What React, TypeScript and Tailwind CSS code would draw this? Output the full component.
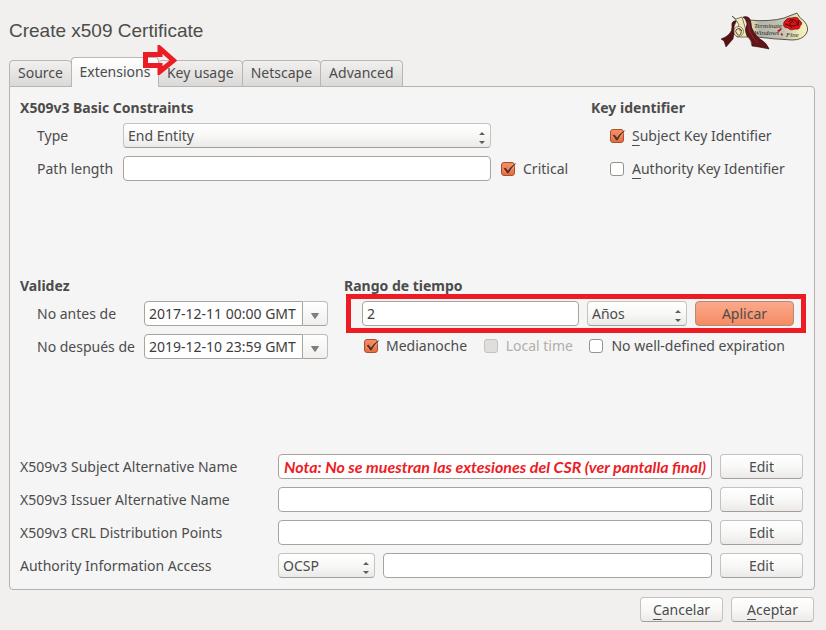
import type { ReactNode } from "react";

const raised =
  "rounded-[4px] border border-[#c6c2bd] border-b-[#a39e98] bg-linear-to-b from-white via-[#f8f8f7] to-[#ebeae9]";
const field =
  "h-[25px] w-full min-w-0 rounded-[4px] border border-[#a8a39c] bg-white px-1 leading-[20px] text-[#3c3c3c] outline-none";

function Button({ children }: { children: ReactNode }) {
  return (
    <button type="button" className={`h-[25px] w-[83px] leading-[20px] ${raised}`}>
      {children}
    </button>
  );
}

function Select({ id, label, options }: { id: string; label?: string; options: string[] }) {
  return (
    <div className="relative w-full">
      <select
        id={id}
        aria-label={label}
        className={`block h-[25px] w-full appearance-none pr-5 pl-1 leading-[20px] outline-none ${raised}`}
      >
        {options.map((o) => (
          <option key={o}>{o}</option>
        ))}
      </select>
      <svg
        className="pointer-events-none absolute right-1.5 bottom-1 h-3 w-1.5"
        viewBox="0 0 6 12"
        fill="#5f5d5b"
        aria-hidden="true"
      >
        <path d="M0 3 3 0 6 3zM0 9h6L3 12z" />
      </svg>
    </div>
  );
}

function DateBox({ id, value }: { id: string; value: string }) {
  return (
    <div className="flex h-[25px] w-full min-w-0">
      <input
        id={id}
        defaultValue={value}
        className="w-0 min-w-0 flex-1 rounded-l-[4px] border border-[#a8a39c] bg-white pl-1 leading-[20px] text-[#3c3c3c] outline-none"
      />
      <button
        type="button"
        aria-label="Elegir fecha"
        className="flex w-[25px] shrink-0 items-center justify-center rounded-r-[4px] border border-l-0 border-[#c0bcb7] border-b-[#a8a39c] bg-linear-to-b from-white to-[#f0efee] pt-1"
      >
        <svg className="h-1.5 w-2" viewBox="0 0 8 6" aria-hidden="true">
          <path d="M.5.5h7L4 5.500z" fill="#85827e" stroke="#6c6a67" strokeWidth=".8" />
        </svg>
      </button>
    </div>
  );
}

function Check({
  children,
  checked = false,
  disabled = false,
}: {
  children: ReactNode;
  checked?: boolean;
  disabled?: boolean;
}) {
  return (
    <label className={`flex items-center gap-2 whitespace-nowrap ${disabled ? "text-[#b3afaa]" : ""}`}>
      <span className="relative size-3.5 shrink-0">
        <input
          type="checkbox"
          defaultChecked={checked}
          disabled={disabled}
          className="peer block size-3.5 appearance-none rounded-[3px] border border-[#96928c] bg-white checked:border-[#a5502f] checked:bg-linear-to-b checked:from-[#f98d62] checked:to-[#ea6b3c] disabled:border-[#c5c2be] disabled:bg-[#dfdedd]"
        />
        <svg
          className="pointer-events-none absolute top-0 left-0 hidden h-3.5 w-4 overflow-visible peer-checked:block"
          viewBox="0 0 16 14"
          fill="none"
          aria-hidden="true"
        >
          <path d="M3 6 6.500 10 13 3" stroke="#f9b79c" strokeWidth="3.600" opacity=".5" />
          <path d="M2.500 6.500 4.500 5.500 7 8.500Q10 3.500 15.500 1 11 5 7.500 11.500H6Q4.500 8.500 2.500 6.500Z" fill="#5b3226" />
        </svg>
      </span>
      <span>{children}</span>
    </label>
  );
}

const Key = ({ children }: { children: ReactNode }) => (
  <span className="underline underline-offset-4">{children}</span>
);

function Logo() {
  return (
    <svg className="h-10 w-[88px]" viewBox="0 0 88 40" role="img" aria-label="Logo">
      <defs>
        <linearGradient id="paper" x1="0" x2="1">
          <stop offset="0" stopColor="#f4ecb4" />
          <stop offset=".2" stopColor="#b4b5ab" />
          <stop offset=".6" stopColor="#c4c4b2" />
          <stop offset=".85" stopColor="#eee8b4" />
          <stop offset="1" stopColor="#f8f3c4" />
        </linearGradient>
      </defs>
      <path
        d="M28 8Q50 10 64 6L77 1Q79 6 84 9 90 16 86 22 82 28 72 28 52 27 37 25Q31 17 28 8Z"
        fill="url(#paper)"
        stroke="#33332b"
        strokeWidth=".8"
      />
      <path d="M12 4 16 7 22 5 28 25H17Q14 23 15 17 24 15 12 4Z" fill="#f1e9b5" stroke="#45412d" strokeWidth=".7" />
      <circle cx="18.500" cy="19.500" r="5" fill="#eee5b8" stroke="#4b4437" strokeWidth=".6" />
      <path d="M22 19q-2-4-5-2t0 5 4-1-2-3" fill="none" stroke="#493a2e" strokeWidth=".9" />
      <path
        d="M14 9Q17 8 16 10 13 14 14 22L13 27 6 35 4 29 1 27Q12 23 12 15 11 10 14 9Z"
        fill="#571014"
        stroke="#27090b"
        strokeWidth=".5"
      />
      <path
        d="M23 5Q30 3 31 11 31 20 40 27 47 31 49 37L39 35 32 34Q32 28 27 24 24 19 27 12 26 7 23 5Z"
        fill="#651519"
        stroke="#27090b"
        strokeWidth=".6"
      />
      <path d="M28.500 10Q28 22 38 31" fill="none" stroke="#8a3436" strokeWidth=".8" />
      <g fill="#2b2b27" fontFamily="Liberation Serif, serif" fontStyle="italic" fontSize="7">
        <text x="34" y="16">Terminate</text>
        <text x="34" y="23">Windows</text>
        <text x="66" y="25">Fine</text>
      </g>
      <path d="m57 19 4-3 1 1-3 3Zm4 2 2 1-1 2-1-1Z" fill="#bd121a" />
      <path
        d="M64 10q3-5 8-4 6-2 7 2 5 3 1 6 0 4-5 3-5 2-7-1-6 0-4-6Z"
        fill="#dc141b"
        stroke="#82080f"
        strokeWidth=".7"
      />
      <path
        d="M68 10q4-4 8-1 3 4-2 5-5 0-4-3 3-3 4 0M65 12q5 1 7 4m7-8q-1 3-1 6"
        fill="none"
        stroke="#570508"
        strokeWidth="1"
      />
    </svg>
  );
}

const tabs = ["Source", "Extensions", "Key usage", "Netscape", "Advanced"];

const names = [
  { id: "san", label: "X509v3 Subject Alternative Name", note: "Nota: No se muestran las extesiones del CSR (ver pantalla final)" },
  { id: "ian", label: "X509v3 Issuer Alternative Name", note: "" },
  { id: "crl", label: "X509v3 CRL Distribution Points", note: "" },
];

export default function App() {
  return (
    <div className="flex min-h-screen flex-col bg-[#f1f0ee] pr-[11px] pb-2 pl-[9px] font-['Noto_Sans',sans-serif] text-[14px] leading-[20px] text-[#4c4c4c]">
      <header className="flex h-[57px] items-start justify-between pt-3 pr-[7px]">
        <h1 className="pt-[5px] font-['Liberation_Sans',sans-serif] text-[19px] leading-[28px]">
          Create x509 Certificate
        </h1>
        <Logo />
      </header>

      <div role="tablist" className="relative z-10 -mb-px flex h-[30px] items-end">
        {tabs.map((t) =>
          t === "Extensions" ? (
            <button
              key={t}
              type="button"
              role="tab"
              aria-selected="true"
              className="-ml-px h-[30px] w-[88px] rounded-t-[4px] border border-b-0 border-[#b9b5b0] bg-linear-to-b from-white to-[#f5f5f5] to-60% pb-0.5"
            >
              {t}
            </button>
          ) : (
            <button
              key={t}
              type="button"
              role="tab"
              aria-selected="false"
              className="-ml-px h-[27px] rounded-t-[4px] border border-[#b9b5b0] bg-linear-to-b from-[#f1f0ef] to-[#dbd9d7] px-2 pb-0.5 first:ml-0"
            >
              {t}
            </button>
          ),
        )}
        <svg
          className="absolute -top-3 left-[134px] h-[30px] w-[34px]"
          viewBox="0 0 34 30"
          fill="none"
          aria-hidden="true"
        >
          <path d="M2.500 9.500H17V3.500L30.500 15.500 17 26.500V20.500H2.500Z" stroke="#ed1c24" strokeWidth="5" />
        </svg>
      </div>

      <main className="flex flex-1 flex-col justify-between rounded-b-[4px] rounded-tr-[4px] border border-[#b5b1ac] bg-[#f5f5f5] pt-[11px] pr-[11px] pb-[11px] pl-2.5">
        <div className="flex">
          <section className="flex-1">
            <h2 className="mb-[5px] font-bold">X509v3 Basic Constraints</h2>
            <div className="grid grid-cols-[86px_1fr_100px] items-center gap-y-2 pl-[17px]">
              <label htmlFor="type">Type</label>
              <Select id="type" options={["End Entity", "Certification Authority"]} />
              <span />
              <label htmlFor="path">Path length</label>
              <input id="path" className={field} />
              <div className="pl-2.5">
                <Check checked>Critical</Check>
              </div>
            </div>
          </section>
          <section className="w-[212px]">
            <h2 className="mb-[5px] font-bold">Key identifier</h2>
            <div className="grid auto-rows-[25px] items-center gap-y-2 pl-[19px]">
              <Check checked>
                <Key>S</Key>ubject Key Identifier
              </Check>
              <Check>
                <Key>A</Key>uthority Key Identifier
              </Check>
            </div>
          </section>
        </div>

        <div className="flex gap-4">
          <section className="w-[308px]">
            <h2 className="mb-[5px] font-bold">Validez</h2>
            <div className="grid grid-cols-[107px_minmax(0,1fr)] items-center gap-y-2 pl-[17px]">
              <label htmlFor="before">No antes de</label>
              <DateBox id="before" value="2017-12-11 00:00 GMT" />
              <label htmlFor="after">No después de</label>
              <DateBox id="after" value="2019-12-10 23:59 GMT" />
            </div>
          </section>
          <section className="flex-1">
            <h2 className="mb-[5px] font-bold">Rango de tiempo</h2>
            <div className="relative mr-[9px] ml-[18px] grid grid-cols-[1fr_100px_99px] gap-2">
              <div className="pointer-events-none absolute -inset-y-[7px] -right-3 -left-4 border-5 border-[#ed1c24]" />
              <input aria-label="Rango de tiempo" defaultValue="2" className={field} />
              <Select id="unit" label="Unidad" options={["Años", "Meses", "Días"]} />
              <button
                type="button"
                className="h-[25px] rounded-[4px] border border-[#b58a77] bg-linear-to-b from-[#fba98a] to-[#f58b63]"
              >
                Aplicar
              </button>
            </div>
            <div className="mt-[7px] flex h-[25px] items-center justify-between pr-[18px] pl-5">
              <Check checked>Medianoche</Check>
              <Check disabled>Local time</Check>
              <Check>No well-defined expiration</Check>
            </div>
          </section>
        </div>

        <div className="grid grid-cols-[250px_1fr_83px] items-center gap-2">
          {names.map((n) => (
            <div key={n.id} className="contents">
              <label htmlFor={n.id}>{n.label}</label>
              <input
                id={n.id}
                defaultValue={n.note}
                className="h-[25px] w-full min-w-0 rounded-[4px] border border-[#a8a39c] bg-white px-[5px] font-[Lato,sans-serif] text-[16px] leading-[20px] font-bold text-[#ed1c24] italic outline-none"
              />
              <Button>Edit</Button>
            </div>
          ))}
          <label htmlFor="aia">Authority Information Access</label>
          <div className="grid grid-cols-[97px_1fr] gap-2">
            <Select id="method" label="Método de acceso" options={["OCSP", "caIssuers"]} />
            <input id="aia" className={field} />
          </div>
          <Button>Edit</Button>
        </div>
      </main>

      <footer className="mt-[7px] flex justify-end gap-2 pr-px">
        <Button>
          <Key>C</Key>ancelar
        </Button>
        <Button>
          <Key>A</Key>ceptar
        </Button>
      </footer>
    </div>
  );
}
